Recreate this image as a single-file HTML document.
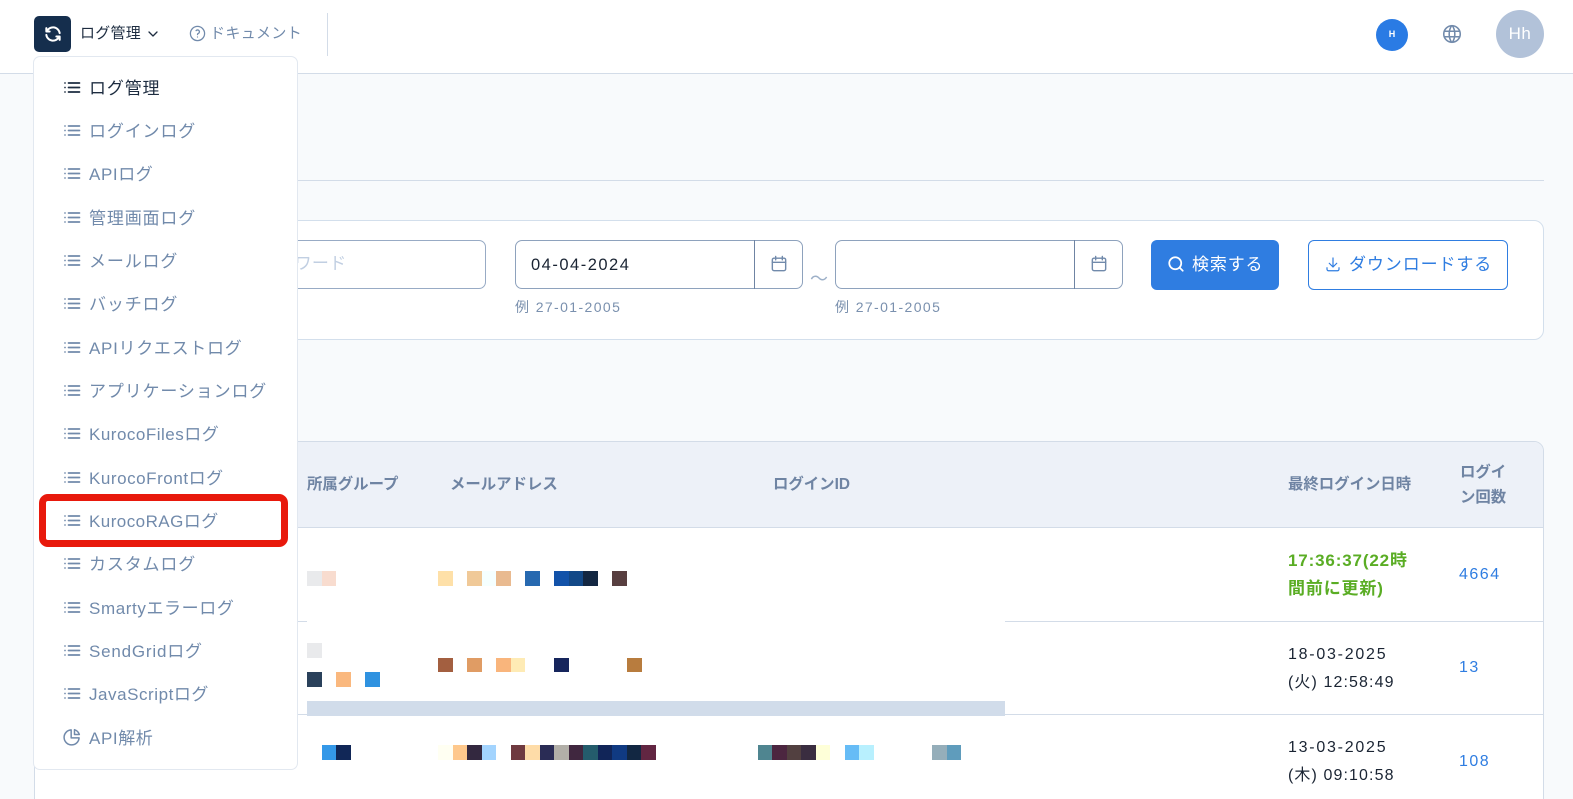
<!DOCTYPE html>
<html lang="ja">
<head>
<meta charset="utf-8">
<title>ログ管理</title>
<style>
*{box-sizing:border-box}
html,body{margin:0;padding:0;width:1573px;height:799px;overflow:hidden}
#w{position:relative;width:1573px;height:799px;overflow:hidden;background:#f8fafc;font-family:"Liberation Sans","Noto Sans CJK JP",sans-serif;color:#1a2433}
.a{position:absolute}
.t{position:absolute;white-space:nowrap;line-height:20px}
svg{position:absolute;fill:none;stroke-linecap:round;stroke-linejoin:round}
.s{position:absolute;height:15px;width:15px}
.m{position:absolute;left:89px;font-size:17px;letter-spacing:.85px;line-height:24px;color:#718aab;white-space:nowrap;margin-top:1px}
.th{position:absolute;font-size:15.4px;font-weight:700;line-height:25px;color:#6f84a3;white-space:nowrap}
.d{position:absolute;font-size:16px;letter-spacing:1.1px;line-height:27.5px;color:#1a2433;white-space:nowrap}
.d b{font-weight:400;letter-spacing:1.75px}
.n{position:absolute;font-size:16px;letter-spacing:1.5px;line-height:20px;color:#2f7de1;white-space:nowrap}
.hint{position:absolute;font-size:14px;letter-spacing:1.4px;line-height:20px;color:#7a90ae;white-space:nowrap}
.ic{stroke:#718aab;stroke-width:1.7}
.li{left:63px;stroke:#718aab;stroke-width:1.7}
</style>
</head>
<body>
<div id="w">
<!-- header -->
<div class="a" style="left:0;top:0;width:1573px;height:74px;background:#fff;border-bottom:1px solid #d3dce8"></div>
<div class="a" style="left:34px;top:16px;width:37px;height:36px;background:#152e4d;border-radius:5px"></div>
<svg style="left:43px;top:24px" width="20" height="20" viewBox="0 0 24 24" stroke="#fff" stroke-width="2.4"><path d="M20 11A8.100 8.100 0 0 0 4.500 9M4 5v4h4M4 13a8.100 8.100 0 0 0 15.500 2m.5 4v-4h-4"/></svg>
<div class="t" style="left:80px;top:24px;font-size:15px;letter-spacing:.25px;color:#1d2c40">ログ管理</div>
<svg style="left:147px;top:28px" width="12" height="12" viewBox="0 0 12 12" stroke="#1d2c40" stroke-width="1.300"><path d="M2 4l4 4l4-4"/></svg>
<svg style="left:189px;top:25px" width="17" height="17" viewBox="0 0 24 24" stroke="#718aab" stroke-width="1.800"><circle cx="12" cy="12" r="10"/><path d="M12 17v.01M12 13.500a1.500 1.500 0 0 1 1-1.500a2.600 2.600 0 1 0-3-4"/></svg>
<div class="t" style="left:210px;top:24px;font-size:15px;letter-spacing:.35px;color:#718aab">ドキュメント</div>
<div class="a" style="left:327px;top:13px;width:1px;height:43px;background:#d3dce8"></div>
<div class="a" style="left:1376px;top:18.500px;width:32px;height:32px;border-radius:50%;background:#2a7be4;color:#fff;font-size:9px;font-weight:700;line-height:31px;text-align:center">H</div>
<svg style="left:1441px;top:23px" width="22" height="22" viewBox="0 0 24 24" stroke="#718aab" stroke-width="1.700"><path d="M3 12a9 9 0 1 0 18 0a9 9 0 0 0-18 0M3.600 9h16.800M3.600 15h16.800M11.500 3a17 17 0 0 0 0 18M12.500 3a17 17 0 0 1 0 18"/></svg>
<div class="a" style="left:1496px;top:10px;width:48px;height:48px;border-radius:50%;background:#b2c2d9;color:#fff;font-size:17px;letter-spacing:.5px;line-height:47px;text-align:center">Hh</div>

<!-- section rule -->
<div class="a" style="left:34px;top:180px;width:1510px;height:1px;background:#d3dce8"></div>

<!-- filter card -->
<div class="a" style="left:34px;top:220px;width:1510px;height:120px;background:#fff;border:1px solid #d3dfec;border-radius:10px"></div>
<div class="a" style="left:200px;top:240px;width:286px;height:49px;border:1px solid #98abc5;border-radius:7px;background:#fff"></div>
<div class="t" style="left:260px;top:254px;font-size:17px;color:#c1cfe2;letter-spacing:.3px">キーワード</div>

<div class="a" style="left:515px;top:240px;width:288px;height:49px;border:1px solid #8ea2bd;border-radius:7px;background:#fff"></div>
<div class="a" style="left:754px;top:240px;width:1px;height:49px;background:#6f84a3"></div>
<div class="t" style="left:531px;top:255px;font-size:16.500px;letter-spacing:1.500px;color:#1a2433">04-04-2024</div>
<svg class="ic" style="left:769px;top:254px" width="20" height="20" viewBox="0 0 24 24"><rect x="4" y="5" width="16" height="15" rx="2"/><path d="M8 3v4M16 3v4M4 10h16"/></svg>
<div class="hint" style="left:515px;top:297px">例 27-01-2005</div>

<div class="t" style="left:810px;top:269px;font-size:18px;color:#9db0c8">〜</div>

<div class="a" style="left:835px;top:240px;width:288px;height:49px;border:1px solid #8ea2bd;border-radius:7px;background:#fff"></div>
<div class="a" style="left:1074px;top:240px;width:1px;height:49px;background:#6f84a3"></div>
<svg class="ic" style="left:1089px;top:254px" width="20" height="20" viewBox="0 0 24 24"><rect x="4" y="5" width="16" height="15" rx="2"/><path d="M8 3v4M16 3v4M4 10h16"/></svg>
<div class="hint" style="left:835px;top:297px">例 27-01-2005</div>

<div class="a" style="left:1151px;top:240px;width:128px;height:50px;background:#2f7de1;border-radius:6px"></div>
<svg style="left:1167px;top:255px" width="18" height="18" viewBox="0 0 24 24" stroke="#fff" stroke-width="2.300"><circle cx="11" cy="11" r="8"/><path d="M21 21l-4.300-4.300"/></svg>
<div class="t" style="left:1192px;top:255px;font-size:17px;letter-spacing:.85px;color:#fff">検索する</div>

<div class="a" style="left:1308px;top:240px;width:200px;height:50px;background:#fff;border:1px solid #2f7de1;border-radius:6px"></div>
<svg style="left:1324px;top:255px" width="18" height="18" viewBox="0 0 24 24" stroke="#2f7de1" stroke-width="1.600"><path d="M4 17v2a2 2 0 0 0 2 2h12a2 2 0 0 0 2-2v-2M7 11l5 5l5-5M12 4v12"/></svg>
<div class="t" style="left:1349px;top:255px;font-size:17px;letter-spacing:.9px;color:#2f7de1">ダウンロードする</div>

<!-- table -->
<div class="a" style="left:34px;top:441px;width:1510px;height:370px;background:#fff;border:1px solid #d3dce8;border-radius:10px;overflow:hidden">
  <div class="a" style="left:0;top:0;width:1510px;height:86px;background:#edf1f8;border-bottom:1px solid #d3dce8"></div>
  <div class="a" style="left:0;top:179px;width:1510px;height:1px;background:#d3dce8"></div>
  <div class="a" style="left:0;top:272px;width:1510px;height:1px;background:#d3dce8"></div>
</div>
<div class="th" style="left:307px;top:472px">所属グループ</div>
<div class="th" style="left:450px;top:472px">メールアドレス</div>
<div class="th" style="left:773px;top:472px">ログインID</div>
<div class="th" style="left:1288px;top:472px">最終ログイン日時</div>
<div class="th" style="left:1460px;top:460px">ログイ<br>ン回数</div>

<div class="d" style="left:1288px;top:547px;color:#5aad24;font-weight:700;letter-spacing:.85px;font-size:17px">17:36:37(22時<br>間前に更新)</div>
<div class="n" style="left:1459px;top:565px">4664</div>
<div class="d" style="left:1288px;top:641px"><b>18-03-2025</b><br>(火) 12:58:49</div>
<div class="n" style="left:1459px;top:658px">13</div>
<div class="d" style="left:1288px;top:734px"><b>13-03-2025</b><br>(木) 09:10:58</div>
<div class="n" style="left:1459px;top:752px">108</div>

<!-- redaction -->
<div class="a" style="left:307px;top:619px;width:698px;height:82px;background:#fff"></div>
<div class="a" style="left:307px;top:701px;width:698px;height:15px;background:#d1dcea"></div>

<!-- swatches row 1 -->
<div class="s" style="left:307px;top:571px;background:#e9eaec"></div>
<div class="s" style="left:322px;top:571px;width:14px;background:#f8dccf"></div>
<div class="s" style="left:438px;top:571px;background:#fee0a8"></div>
<div class="s" style="left:467px;top:571px;background:#f0c998"></div>
<div class="s" style="left:482px;top:571px;width:14px;background:#f5ffff"></div>
<div class="s" style="left:496px;top:571px;background:#e9ba90"></div>
<div class="s" style="left:525px;top:571px;background:#2769b0"></div>
<div class="s" style="left:554px;top:571px;background:#1252a9"></div>
<div class="s" style="left:569px;top:571px;width:14px;background:#124887"></div>
<div class="s" style="left:583px;top:571px;background:#132742"></div>
<div class="s" style="left:612px;top:571px;background:#583f40"></div>
<!-- swatches row 2 -->
<div class="s" style="left:307px;top:643px;background:#e9eaec"></div>
<div class="s" style="left:438px;top:658px;height:14px;background:#a35f40"></div>
<div class="s" style="left:467px;top:658px;height:14px;background:#e09c64"></div>
<div class="s" style="left:496px;top:658px;height:14px;background:#f9b57c"></div>
<div class="s" style="left:511px;top:658px;width:14px;height:14px;background:#feebb5"></div>
<div class="s" style="left:554px;top:658px;height:14px;background:#16255c"></div>
<div class="s" style="left:627px;top:658px;height:14px;background:#b87c3e"></div>
<div class="s" style="left:307px;top:672px;background:#2a415b"></div>
<div class="s" style="left:336px;top:672px;background:#fab87e"></div>
<div class="s" style="left:365px;top:672px;background:#2f92e0"></div>
<!-- swatches row 3 -->
<div class="s" style="left:322px;top:745px;width:14px;background:#3498e8"></div>
<div class="s" style="left:336px;top:745px;background:#112757"></div>
<div class="s" style="left:438px;top:745px;background:#fffff2"></div>
<div class="s" style="left:453px;top:745px;width:14px;background:#fec88c"></div>
<div class="s" style="left:467px;top:745px;background:#33283f"></div>
<div class="s" style="left:482px;top:745px;width:14px;background:#a3d4fe"></div>
<div class="s" style="left:511px;top:745px;width:14px;background:#6f3a40"></div>
<div class="s" style="left:525px;top:745px;background:#fedca8"></div>
<div class="s" style="left:540px;top:745px;width:14px;background:#2a2c55"></div>
<div class="s" style="left:554px;top:745px;background:#b2afa8"></div>
<div class="s" style="left:569px;top:745px;width:14px;background:#40273f"></div>
<div class="s" style="left:583px;top:745px;background:#245c6c"></div>
<div class="s" style="left:598px;top:745px;width:14px;background:#112558"></div>
<div class="s" style="left:612px;top:745px;background:#103a82"></div>
<div class="s" style="left:627px;top:745px;width:14px;background:#122742"></div>
<div class="s" style="left:641px;top:745px;background:#622642"></div>
<div class="s" style="left:758px;top:745px;width:14px;background:#4f8590"></div>
<div class="s" style="left:772px;top:745px;background:#4c2640"></div>
<div class="s" style="left:787px;top:745px;width:14px;background:#524040"></div>
<div class="s" style="left:801px;top:745px;background:#3a2d40"></div>
<div class="s" style="left:816px;top:745px;width:14px;background:#feffd8"></div>
<div class="s" style="left:845px;top:745px;width:14px;background:#66bcf6"></div>
<div class="s" style="left:859px;top:745px;background:#b8f0fe"></div>
<div class="s" style="left:932px;top:745px;background:#95aeba"></div>
<div class="s" style="left:947px;top:745px;width:14px;background:#5f9cbc"></div>

<!-- dropdown -->
<div class="a" style="left:33px;top:56px;width:265px;height:714px;background:#fff;border:1px solid #e2e8f0;border-radius:7px"></div>
<svg class="li" style="top:80px;stroke:#1d2c40" width="18" height="16" viewBox="0 0 18 16"><path d="M5.500 3h11M5.500 7.500h11M5.500 12h11M2 3v.01M2 7.500v.01M2 12v.01"/></svg>
<div class="m" style="top:76px;color:#1d2c40">ログ管理</div>
<svg class="li" style="top:123px" width="18" height="16" viewBox="0 0 18 16"><path d="M5.500 3h11M5.500 7.500h11M5.500 12h11M2 3v.01M2 7.500v.01M2 12v.01"/></svg>
<div class="m" style="top:119px">ログインログ</div>
<svg class="li" style="top:166px" width="18" height="16" viewBox="0 0 18 16"><path d="M5.500 3h11M5.500 7.500h11M5.500 12h11M2 3v.01M2 7.500v.01M2 12v.01"/></svg>
<div class="m" style="top:162px;letter-spacing:.6px">APIログ</div>
<svg class="li" style="top:210px" width="18" height="16" viewBox="0 0 18 16"><path d="M5.500 3h11M5.500 7.500h11M5.500 12h11M2 3v.01M2 7.500v.01M2 12v.01"/></svg>
<div class="m" style="top:206px">管理画面ログ</div>
<svg class="li" style="top:253px" width="18" height="16" viewBox="0 0 18 16"><path d="M5.500 3h11M5.500 7.500h11M5.500 12h11M2 3v.01M2 7.500v.01M2 12v.01"/></svg>
<div class="m" style="top:249px">メールログ</div>
<svg class="li" style="top:296px" width="18" height="16" viewBox="0 0 18 16"><path d="M5.500 3h11M5.500 7.500h11M5.500 12h11M2 3v.01M2 7.500v.01M2 12v.01"/></svg>
<div class="m" style="top:292px">バッチログ</div>
<svg class="li" style="top:340px" width="18" height="16" viewBox="0 0 18 16"><path d="M5.500 3h11M5.500 7.500h11M5.500 12h11M2 3v.01M2 7.500v.01M2 12v.01"/></svg>
<div class="m" style="top:336px;letter-spacing:.7px">APIリクエストログ</div>
<svg class="li" style="top:383px" width="18" height="16" viewBox="0 0 18 16"><path d="M5.500 3h11M5.500 7.500h11M5.500 12h11M2 3v.01M2 7.500v.01M2 12v.01"/></svg>
<div class="m" style="top:379px">アプリケーションログ</div>
<svg class="li" style="top:426px" width="18" height="16" viewBox="0 0 18 16"><path d="M5.500 3h11M5.500 7.500h11M5.500 12h11M2 3v.01M2 7.500v.01M2 12v.01"/></svg>
<div class="m" style="top:422px;letter-spacing:.5px">KurocoFilesログ</div>
<svg class="li" style="top:470px" width="18" height="16" viewBox="0 0 18 16"><path d="M5.500 3h11M5.500 7.500h11M5.500 12h11M2 3v.01M2 7.500v.01M2 12v.01"/></svg>
<div class="m" style="top:466px;letter-spacing:.55px">KurocoFrontログ</div>
<svg class="li" style="top:513px" width="18" height="16" viewBox="0 0 18 16"><path d="M5.500 3h11M5.500 7.500h11M5.500 12h11M2 3v.01M2 7.500v.01M2 12v.01"/></svg>
<div class="m" style="top:509px;letter-spacing:.45px">KurocoRAGログ</div>
<svg class="li" style="top:556px" width="18" height="16" viewBox="0 0 18 16"><path d="M5.500 3h11M5.500 7.500h11M5.500 12h11M2 3v.01M2 7.500v.01M2 12v.01"/></svg>
<div class="m" style="top:552px">カスタムログ</div>
<svg class="li" style="top:600px" width="18" height="16" viewBox="0 0 18 16"><path d="M5.500 3h11M5.500 7.500h11M5.500 12h11M2 3v.01M2 7.500v.01M2 12v.01"/></svg>
<div class="m" style="top:596px;letter-spacing:.6px">Smartyエラーログ</div>
<svg class="li" style="top:643px" width="18" height="16" viewBox="0 0 18 16"><path d="M5.500 3h11M5.500 7.500h11M5.500 12h11M2 3v.01M2 7.500v.01M2 12v.01"/></svg>
<div class="m" style="top:639px;letter-spacing:.8px">SendGridログ</div>
<svg class="li" style="top:686px" width="18" height="16" viewBox="0 0 18 16"><path d="M5.500 3h11M5.500 7.500h11M5.500 12h11M2 3v.01M2 7.500v.01M2 12v.01"/></svg>
<div class="m" style="top:682px;letter-spacing:.55px">JavaScriptログ</div>
<svg style="left:62px;top:727px" width="20" height="20" viewBox="0 0 24 24" stroke="#718aab" stroke-width="1.800"><path d="M11 3.500a9 9 0 1 0 9.500 9.500h-9.500z"/><path d="M15 3.200a9 9 0 0 1 5.800 5.800h-5.800z"/></svg>
<div class="m" style="top:726px;letter-spacing:.6px">API解析</div>

<!-- red highlight -->
<div class="a" style="left:38.500px;top:493.500px;width:249.500px;height:53px;border:7px solid #e8190c;border-radius:9px"></div>
</div>
</body>
</html>
